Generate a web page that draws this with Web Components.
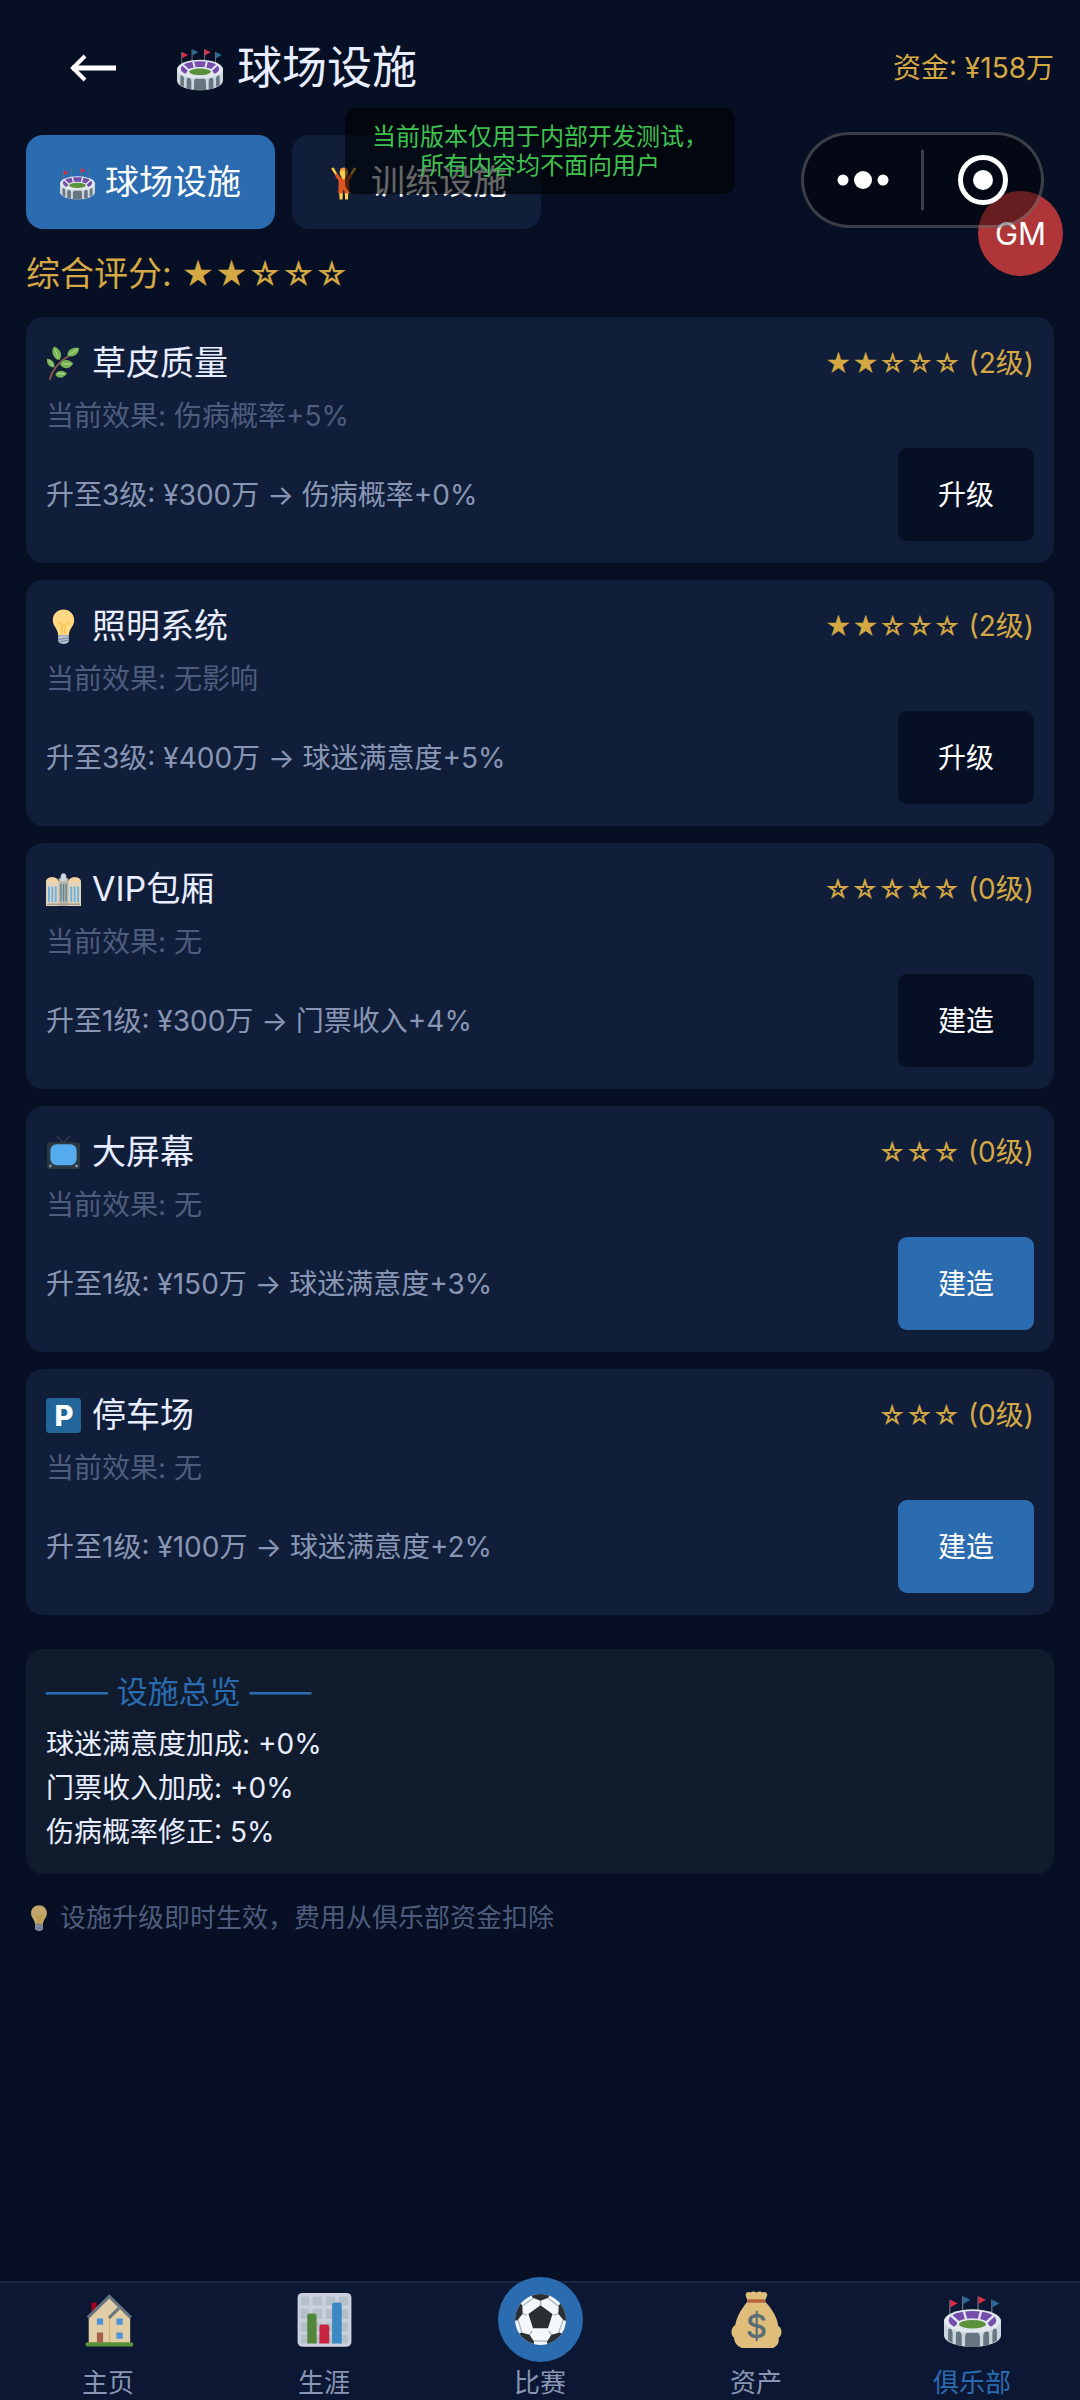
<!DOCTYPE html>
<html lang="zh-CN">
<head>
<meta charset="utf-8">
<meta name="viewport" content="width=device-width, initial-scale=1">
<title>球场设施</title>
<style>
  :root {
    --bg: #060f23;
    --card: #101e3a;
    --panel: #111b2e;
    --nav: #0c1733;
    --line: #1a2745;
    --blue: #2b6cb0;
    --gold: #d4a843;
    --text: #e8eeff;
    --muted: #8896b4;
    --dim: #4e5c7d;
    --gutter: 26px;
    --gap: 17px;
  }
  html { background: var(--bg); }
  body {
    margin: 0;
    color: var(--text);
    font-family: Inter, "Noto Sans CJK SC", sans-serif;
    font-size: 28px;
    line-height: 42px;
  }
</style>
</head>
<body>
<club-app></club-app>

<script>
const ICONS = {
  stadium: `
    <g stroke="#66757f" stroke-width=".8"><path d="M3.7 5.5V17M11.8 3.5V14M21.5 3.5V14M30.2 5.5V17"/></g>
    <path fill="#dd2e44" d="M4 5.5l4.6 2.3L4 10.4zM21.8 3.3l4.6 2.3-4.6 2.6z"/>
    <path fill="#2d6a97" d="M12.1 3.3l4.6 2.3-4.6 2.6zM30.5 5.5l4.6 2.3-4.6 2.6z"/>
    <path fill="#ccd6dd" d="M0 18.5V28c0 4.200 8 7.400 18 7.400S36 32.200 36 28v-9.500z"/>
    <path fill="#66757f" d="M13.300 35.200V29.500c0-6.500 9.400-6.500 9.400 0v5.700c-3 .3-6.400.3-9.400 0zM7.500 34V27.500c0-3.200 3.700-2.600 3.700.7v6.600zM28.500 34V27.500c0-3.200-3.700-2.600-3.700.7v6.600zM2.600 31.300V25.500c0-3 2.800-2 2.800.8v6.500zM33.400 31.300V25.500c0-3-2.800-2-2.800.8v6.500z"/>
    <ellipse cx="18" cy="19" rx="18" ry="7.400" fill="#e1e8ed"/>
    <path fill="#744eaa" d="M3 18.600C3 15 9.500 12.700 18 12.700S33 15 33 18.600c0 1.500-1.200 2.800-3.400 3.900L25.500 19.200c-3-2-12-2-15 0L6.400 22.500C4.200 21.400 3 20.100 3 18.600z"/>
    <path stroke="#e1e8ed" stroke-width="1.500" d="M14 18L12.500 12.500M22 18l1.500-5.500M9.500 20L4.500 15.500M26.500 20l5-4.500"/>
    <ellipse cx="18" cy="20.800" rx="10" ry="3.600" fill="#e1e8ed"/>
    <ellipse cx="18" cy="21" rx="8.500" ry="2.700" fill="#5c913b"/>`,
  lifter: `
    <path stroke="#26303a" stroke-width="1" d="M1 3.500h34"/>
    <path stroke="#141a22" stroke-width="3" stroke-linecap="round" d="M2.500 2.500v2M33.500 2.500v2"/>
    <path fill="none" stroke="#ffcc4d" stroke-width="2.600" stroke-linecap="round" d="M7 4l5.500 8.500M29.500 4L24 12.500"/>
    <path fill="none" stroke="#dd551f" stroke-width="3.400" stroke-linecap="round" d="M11 10.500l3.500 5M25.500 10.500l-3.500 5"/>
    <path fill="#ffcc4d" d="M13.600 27.500h3.700l-.3 8h-3zM19.300 27.500H23l-.4 8h-3zM16 12h4.500v4H16z"/>
    <path fill="#dd551f" d="M13 14l3.500-.5 1.800 1.500 1.700-1.500 3.500.5.200 8 .4 7h-4.600l-1.200-4-1.200 4h-4.600l.4-7z"/>
    <ellipse cx="18.300" cy="8" rx="4.200" ry="5" fill="#ffcc4d"/>
    <path fill="#ef9645" d="M14 7c0-6 8.600-6 8.600 0-1.500-1.500-6-2-8.600 0z"/>`,
  leaf: `
    <path fill="none" stroke="#8a5a4a" stroke-width="2" stroke-linecap="round" d="M4 34C6 26 12 17 25 9"/>
    <path fill="#77b255" d="M11 14C5 9 6 3 8.500.5 15 3 17.500 9 14 14.500zM22 10C22 3 28 1 34 2c0 6-5 10.500-12 8zM8.500 22C3 22 .5 18 1 13c5 0 8.500 4 7.500 9zM14.500 19c2-6 9.500-6 13.500-1-3 6-10 6.500-13.500 1zM9.500 29.500c2-5 8-5.500 12-1.500-3 5.500-9 6-12 1.500z"/>
    <path fill="none" stroke="#a6d388" stroke-width="1.400" d="M9.500 3.500l3 9M24 9l8-5.500M3 15l4.500 5.500M17 18.500h9M12 28.500h7"/>`,
  bulb: `
    <path fill="#ffd983" d="M29 11.500C29 18 23.500 20 23.500 27h-11C12.500 20 7 18 7 11.500 7 5 12 .5 18 .5s11 4.500 11 11z"/>
    <path fill="none" stroke="#ffc04d" stroke-width="1.400" d="M16.500 26V17l-4-4 M19.500 26V17l4-4M16.500 17h3"/>
    <path fill="#b8c5d6" d="M12.500 27h11v5.500c0 2-2.500 3.500-5.500 3.500s-5.500-1.500-5.500-3.500z"/>
    <path stroke="#7f8ea3" stroke-width="1.200" d="M12.500 31.500l11-2M13 34l10-2"/>`,
  building: `
    <path fill="#e1d5bd" d="M0 10c0-3 3-4.500 6.500-4.500S12 7 12.500 9h11C24 7 26 5.500 29.500 5.500S36 7 36 10v25H0z"/>
    <path fill="#f3d2a2" d="M.5 10.500c0-6.500 12-6.500 12.500 0zM23 10.500c.5-6.500 12.500-6.500 12.500 0z"/>
    <path fill="#b8b5aa" d="M13 6.500h10V35H13z"/><path fill="#ccd6dd" d="M15 5.500c0-5.500 6-5.500 6 0v4h-6z"/>
    <path fill="#6fb0dc" d="M2 15h2v16H2zM5.500 15h2v16h-2zM9 15h2v16H9zM25 15h2v16h-2zM28.500 15h2v16h-2zM32 15h2v16h-2z"/>
    <path fill="#5b8299" d="M14.700 12H16v18h-1.300zM17.400 12h1.300v18h-1.300zM20 12h1.300v18H20z"/>
    <path fill="#a79c88" d="M1 32.500h34V34H1z"/>`,
  tv: `
    <path fill="none" stroke="#33404c" stroke-width="1.200" d="M11 1l7 7 7-7"/>
    <rect x="1" y="7.500" width="34" height="27.500" rx="3" fill="#2b3741"/>
    <rect x="4.500" y="9.500" width="27" height="21.500" rx="6.500" fill="#55acee"/>
    <circle cx="4.500" cy="32" r="1.500" fill="#8899a6"/><circle cx="31.500" cy="32" r="1.500" fill="#8899a6"/>`,
  parking: `
    <rect width="36" height="36" rx="3.500" fill="#226699"/>
    <text x="18.500" y="29" text-anchor="middle" font-family="Inter, sans-serif" font-weight="800" font-size="30" fill="#fff">P</text>`,
  home: `
    <path fill="#a0041e" d="M7.200 7.300h3.300v7H7.200z"/>
    <path fill="#e1cda6" d="M5.500 16L18.500 3.500l6.400 6.700 6.800 6.800v16H5.500z"/>
    <path stroke="#d6ae62" stroke-width=".6" d="M18.700 16v17"/>
    <path fill="none" stroke="#66757f" stroke-width="1.900" d="M4.900 16.800L18.500 3.400l13.600 13.400M18.300 17l6.200-6"/>
    <path fill="#4f94d4" d="M10.700 17.400h3.900v3.900h-3.900zM23 17.400h4v3.900h-4zM23 26.200h4v3.900h-4z"/>
    <path fill="#a85f4a" d="M10.700 26.200h3.900v6.500h-3.900z"/>
    <rect x="3.500" y="32.300" width="30.100" height="2.800" rx="1.200" fill="#5c913b"/>`,
  chart: `
    <rect x="1" y="1.200" width="34" height="34" rx="3" fill="#ccd0de"/>
    <path fill="#b4c1cb" d="M3 3.500h5.200v5.700H3zM10.500 3.500h6v5.700h-6zM18.800 3.500h6v5.700h-6zM27 3.500h6v5.700h-6zM3 11.400h5.200v6.300H3zM10.500 11.400h6v6.300h-6zM18.800 11.400h6v6.300h-6zM27 11.400h6v6.300h-6zM3 19.900h5.200v5.700H3zM10.500 19.900h6v5.700h-6zM18.800 19.900h6v5.700h-6zM27 19.900h6v5.700h-6zM3 27.800h5.200v5.400H3zM10.500 27.800h6v5.400h-6zM18.800 27.800h6v5.400h-6zM27 27.800h6v5.400h-6z"/>
    <path fill="#53853a" d="M7.100 33.200V15.700q0-1.500 1.500-1.500h2.900q1.500 0 1.500 1.500v17.500z"/>
    <path fill="#c9243f" d="M14.800 33.200V22.700q0-1.500 1.500-1.500h3.200q1.500 0 1.500 1.500v10.500z"/>
    <path fill="#3b88c3" d="M22.800 33.200V8.800q0-1.500 1.500-1.500h3.100q1.500 0 1.500 1.500v24.400z"/>`,
  ball: `
    <clipPath id="b"><circle cx="18" cy="18" r="18"/></clipPath>
    <circle cx="18" cy="18" r="18" fill="#f5f8fa"/>
    <g clip-path="url(#b)">
      <g id="s"><path stroke="#aab8c2" stroke-width="1" d="M18 8V4M23.500 3l7.200 5.600"/><path fill="#292f33" d="M10-2l2.500 4.700L18 4.800l5.500-2.100L26-2z"/></g>
      <use href="#s" transform="rotate(72 18 18)"/><use href="#s" transform="rotate(144 18 18)"/>
      <use href="#s" transform="rotate(216 18 18)"/><use href="#s" transform="rotate(288 18 18)"/>
      <path fill="#292f33" d="M18 8l8.500 6.100-3.200 10H12.700l-3.200-10z"/>
    </g>`,
  bag: `
    <path fill="#dfbe7c" d="M12.500 6.500L11.200 3c-.5-2 1.500-3 3-2 1-1 2.500-.8 3.700 0 1.300-.8 2.800-1 3.800 0 1.500-1 3.500 0 3 2l-1.500 3.500c4 4 8 10 8.500 15.500 3 2 2.500 6 .3 7.500C32.500 33 31 34.500 28.500 36h-20c-3-1.500-4.500-3.500-4.700-6.500-2.500-2-2-6.500.8-8C5.500 16 9 10.500 12.500 6.500z"/>
    <path fill="#b5653c" d="M12.800 5.200h10.400q1 1.100 0 2.200H12.800q-1-1.100 0-2.200z"/>
    <text x="18" y="29.500" text-anchor="middle" font-family="Inter, sans-serif" font-weight="500" font-size="21" fill="#5c6c77">$</text>`
};

const define = (name, css, html) => customElements.define(name, class extends HTMLElement {
  constructor() {
    super();
    this.attachShadow({ mode: "open" });
  }
  connectedCallback() {
    const markup = typeof html === "function" ? html(this) : html;
    this.shadowRoot.innerHTML = `<style>*{box-sizing:border-box}button{font:inherit;color:inherit;border:0;margin:0;padding:0;background:none;cursor:pointer}${css}</style>${markup}`;
  }
});

/* Square pictogram; the side comes from --size */
define("emoji-icon", `
  :host { display: block; flex: none; width: var(--size, 35px); height: var(--size, 35px); }
  svg { display: block; width: 100%; height: 100%; overflow: visible; }
`, el => `<svg viewBox="0 0 36 36" aria-hidden="true">${ICONS[el.getAttribute("name")]}</svg>`);

define("app-header", `
  :host { display: flex; align-items: center; gap: var(--gap); height: 135px; padding: 0 var(--gutter); }
  button { display: flex; justify-content: center; align-items: center; width: 134px; height: 94px; }
  h1 { display: flex; align-items: center; gap: 14px; flex: 1; margin: 0; font-size: 45px; line-height: 60px; font-weight: 400; }
  emoji-icon { --size: 46px; }
  .funds { color: var(--gold); white-space: nowrap; }
`, `
  <button type="button" aria-label="返回"><svg width="48" height="28" viewBox="0 0 48 28" fill="none" stroke="#fff"><path stroke-width="5" d="M3 14h44"/><path stroke-width="4" d="M16 2L4 14l12 12"/></svg></button>
  <h1><emoji-icon name="stadium"></emoji-icon><slot></slot></h1>
  <div class="funds"><slot name="funds"></slot></div>
`);

define("tab-button", `
  :host { display: block; }
  button { display: flex; align-items: center; gap: 10px; height: 94px; padding: 0 34px; border-radius: 17px; background: var(--card); color: #fff; font-size: 34px; white-space: nowrap; }
  :host([active]) button { background: var(--blue); }
`, el => `<button type="button" aria-pressed="${el.hasAttribute("active")}"><emoji-icon name="${el.getAttribute("icon")}"></emoji-icon><slot></slot></button>`);

define("overall-rating", `
  :host { display: block; margin: 20px 0 var(--gap); color: var(--gold); font-size: 34px; line-height: 50px; }
  .stars { font-size: 32px; }
`, el => `<slot></slot> <span class="stars">${el.getAttribute("stars")}</span>`);

define("facility-card", `
  :host { display: block; padding: 20px 20px 22px; border-radius: 17px; background: var(--card); }
  header, footer { display: flex; align-items: center; justify-content: space-between; }
  h2 { display: flex; align-items: center; gap: 11px; margin: 0; font-size: 34px; line-height: 52px; font-weight: 400; }
  .level { color: var(--gold); }
  .stars { font-size: 26px; }
  .effect { margin: 6px 0 11px; color: var(--dim); }
  .upgrade { color: var(--muted); }
  button { width: 136px; height: 93px; border-radius: 9px; background: var(--bg); color: #fff; }
  :host([affordable]) button { background: var(--blue); }
`, el => `
  <header><h2><emoji-icon name="${el.getAttribute("icon")}"></emoji-icon><span>${el.getAttribute("name")}</span></h2><span class="level"><span class="stars">${el.getAttribute("stars")}</span> (${el.getAttribute("level")}级)</span></header>
  <div class="effect">当前效果: ${el.getAttribute("effect")}</div>
  <footer><span class="upgrade"><slot></slot></span><button type="button">${el.getAttribute("action")}</button></footer>
`);

define("overview-panel", `
  :host { display: block; margin-top: 34px; padding: 20px; border-radius: 17px; background: var(--panel); line-height: 44px; }
  h2 { margin: 0 0 7px; font-size: 31px; line-height: 46px; font-weight: 400; color: var(--blue); }
`, `<h2>—— 设施总览 ——</h2><slot></slot>`);

define("tip-line", `
  :host { display: flex; align-items: center; gap: 8px; margin-top: 22px; font-size: 26px; line-height: 44px; color: var(--dim); }
  emoji-icon { --size: 26px; opacity: .75; }
`, `<emoji-icon name="bulb"></emoji-icon><span><slot></slot></span>`);

define("nav-item", `
  :host { display: block; flex: 1; color: var(--muted); }
  :host([active]) { color: var(--blue); }
  button { display: flex; flex-direction: column; align-items: center; gap: 17px; width: 100%; padding-top: 8px; font-size: 26px; line-height: 35px; }
  emoji-icon { --size: 57px; }
  .disc { display: grid; place-items: center; width: 85px; height: 85px; margin: -14px 0; border-radius: 50%; background: var(--blue); }
  .disc emoji-icon { --size: 51px; }
`, el => {
  const icon = `<emoji-icon name="${el.getAttribute("icon")}"></emoji-icon>`;
  return `<button type="button">${el.hasAttribute("primary") ? `<span class="disc">${icon}</span>` : icon}<span><slot></slot></span></button>`;
});

define("bottom-nav", `
  :host { display: block; margin-top: auto; }
  nav { display: flex; border-top: 2px solid var(--line); background: var(--nav); }
`, `<nav><slot></slot></nav>`);

/* Overlays that float above the page */
define("dev-notice", `
  :host { position: absolute; z-index: 2; top: 108px; left: 50%; transform: translateX(-50%); padding: 14px 27px; border-radius: 11px; background: rgba(0,0,0,.6); color: #3fc150; font-size: 24px; line-height: 29px; text-align: center; white-space: nowrap; }
`, `<slot></slot>`);

define("gm-button", `
  :host { position: absolute; z-index: 1; top: 191px; right: 17px; }
  button { width: 85px; height: 85px; border-radius: 50%; background: #b03538; color: #fff; font-size: 31px; }
`, `<button type="button"><slot></slot></button>`);

define("mini-capsule", `
  :host { position: absolute; z-index: 2; top: 132px; right: 36px; display: flex; align-items: center; width: 243px; height: 96px; border: 3px solid rgba(255,255,255,.22); border-radius: 48px; background: rgba(0,0,0,.42); }
  button { display: grid; place-items: center; flex: 1; height: 100%; }
  i { width: 3px; height: 60px; background: rgba(255,255,255,.22); }
`, `
  <button type="button" aria-label="更多"><svg width="52" height="20" viewBox="0 0 52 20" fill="#fff"><circle cx="6" cy="10" r="5.500"/><circle cx="26" cy="10" r="9"/><circle cx="46" cy="10" r="5.500"/></svg></button>
  <i></i>
  <button type="button" aria-label="关闭"><svg width="50" height="50" viewBox="0 0 50 50"><circle cx="25" cy="25" r="22.500" fill="none" stroke="#fff" stroke-width="5"/><circle cx="25" cy="25" r="10" fill="#fff"/></svg></button>
`);

define("club-app", `
  :host { position: relative; display: flex; flex-direction: column; min-height: 100vh; background: var(--bg); }
  main { padding: 0 var(--gutter) 34px; }
  .tabs { display: flex; gap: var(--gap); }
  .cards { display: grid; gap: var(--gap); }
`, `
  <app-header>球场设施<span slot="funds">资金: ¥158万</span></app-header>
  <main>
    <div class="tabs">
      <tab-button icon="stadium" active>球场设施</tab-button>
      <tab-button icon="lifter">训练设施</tab-button>
    </div>
    <overall-rating stars="★★☆☆☆">综合评分:</overall-rating>
    <div class="cards">
      <facility-card icon="leaf" name="草皮质量" stars="★★☆☆☆" level="2" effect="伤病概率+5%" action="升级">升至3级: ¥300万 → 伤病概率+0%</facility-card>
      <facility-card icon="bulb" name="照明系统" stars="★★☆☆☆" level="2" effect="无影响" action="升级">升至3级: ¥400万 → 球迷满意度+5%</facility-card>
      <facility-card icon="building" name="VIP包厢" stars="☆☆☆☆☆" level="0" effect="无" action="建造">升至1级: ¥300万 → 门票收入+4%</facility-card>
      <facility-card icon="tv" name="大屏幕" stars="☆☆☆" level="0" effect="无" action="建造" affordable>升至1级: ¥150万 → 球迷满意度+3%</facility-card>
      <facility-card icon="parking" name="停车场" stars="☆☆☆" level="0" effect="无" action="建造" affordable>升至1级: ¥100万 → 球迷满意度+2%</facility-card>
    </div>
    <overview-panel>
      <div>球迷满意度加成: +0%</div>
      <div>门票收入加成: +0%</div>
      <div>伤病概率修正: 5%</div>
    </overview-panel>
    <tip-line>设施升级即时生效，费用从俱乐部资金扣除</tip-line>
  </main>
  <bottom-nav>
    <nav-item icon="home">主页</nav-item>
    <nav-item icon="chart">生涯</nav-item>
    <nav-item icon="ball" primary>比赛</nav-item>
    <nav-item icon="bag">资产</nav-item>
    <nav-item icon="stadium" active>俱乐部</nav-item>
  </bottom-nav>
  <gm-button>GM</gm-button>
  <mini-capsule></mini-capsule>
  <dev-notice>当前版本仅用于内部开发测试，<br>所有内容均不面向用户</dev-notice>
`);
</script>
</body>
</html>
